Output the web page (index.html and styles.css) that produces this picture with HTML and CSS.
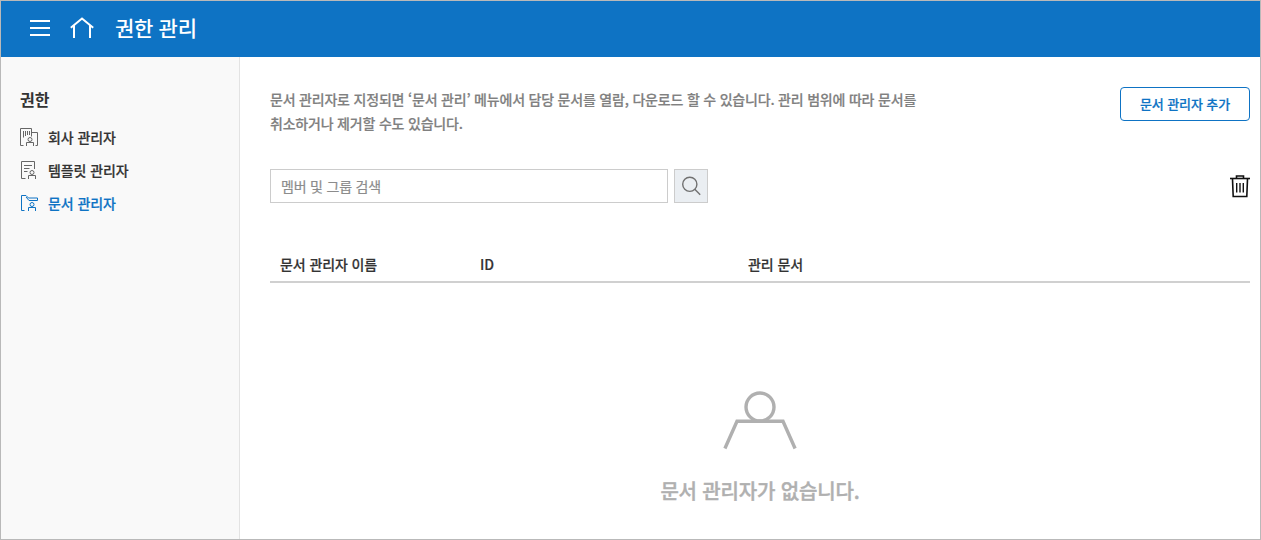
FILE: index.html
```html
<!DOCTYPE html>
<html lang="ko">
<head>
<meta charset="utf-8">
<title>권한 관리</title>
<link rel="stylesheet" href="styles.css">
</head>
<body>
<div class="app">
  <header class="topbar">
    <svg class="menu-icon" width="20" height="16" viewBox="0 0 20 16"><path d="M0 1h20M0 8h20M0 15h20"/></svg>
    <svg class="home-icon" width="24" height="22" viewBox="0 0 24 22"><path d="M.8 10.8 12 1.5l11.2 9.3M4 8.500V21M20 8.500V21"/></svg>
    <h1 class="title">권한 관리</h1>
  </header>
  <div class="body">
    <nav class="sidebar">
      <h2 class="side-title">권한</h2>
      <a class="side-item">
        <svg width="18" height="18" viewBox="0 0 18 18"><path d="M3.500 17.500h-3V.5h11v8M11.500 4.500h6v13h-2M3.500 3v6.500M5.500 3v5M7.500 3v4M9.500 3v4M6.500 18v-3.500h7V18"/><circle cx="10" cy="11.500" r="2"/></svg>
        <span>회사 관리자</span>
      </a>
      <a class="side-item">
        <svg width="18" height="18" viewBox="0 0 18 18"><path d="M5.500 17.500h-4V.5h13V8M4 4.500h8M4 7.500h5.500M4 10.500h3.500M8.500 18v-3.500h7V18"/><circle cx="12" cy="11.500" r="2"/></svg>
        <span>템플릿 관리자</span>
      </a>
      <a class="side-item active">
        <svg width="18" height="18" viewBox="0 0 18 18"><path d="M4.500 16.500h-3V1.500h4.500l2.500 2.500h9v2.500H9L6 3M8.500 17v-3.500h7V17"/><circle cx="12" cy="10.500" r="2"/></svg>
        <span>문서 관리자</span>
      </a>
    </nav>
    <main class="content">
      <section class="intro">
        <p class="desc">문서 관리자로 지정되면 ‘문서 관리’ 메뉴에서 담당 문서를 열람, 다운로드 할 수 있습니다. 관리 범위에 따라 문서를<br>취소하거나 제거할 수도 있습니다.</p>
        <button class="add-btn">문서 관리자 추가</button>
      </section>
      <section class="tools">
        <input class="search" type="text" placeholder="멤버 및 그룹 검색">
        <button class="search-btn" aria-label="검색">
          <svg width="20" height="20" viewBox="0 0 20 20"><circle cx="8.800" cy="8.300" r="7.100"/><path d="m13.800 13.300 5.400 5.400"/></svg>
        </button>
        <svg class="trash" width="20" height="23" viewBox="0 0 20 23"><path class="lid" d="M6.500 3V1h7v2"/><path d="M0 3.500h20"/><path d="M2.500 4l.7 17.500h13.600L17.500 4"/><path class="bars" d="M6.700 8v9.500M10 8v9.500M13.300 8v9.500"/></svg>
      </section>
      <div class="table-head">
        <span>문서 관리자 이름</span><span>ID</span><span>관리 문서</span>
      </div>
      <div class="empty">
        <svg width="76" height="60" viewBox="0 0 76 60"><circle cx="38" cy="16" r="14"/><path d="M2.900 57.500 15 30.300h46l12.100 27.200"/></svg>
        <p>문서 관리자가 없습니다.</p>
      </div>
    </main>
  </div>
</div>
</body>
</html>
```
FILE: styles.css
```css
* { box-sizing: border-box; }
body { margin: 0; font-family: "Noto Sans CJK KR", sans-serif; font-weight: 500; color: #333; -webkit-text-stroke: .2px currentColor; }
h1, h2, p { margin: 0; }
svg { display: block; fill: none; stroke: currentColor; flex: none; }
.app { width: 1261px; height: 540px; border: 1px solid #b9b9b9; background: #fff; display: flex; flex-direction: column; overflow: hidden; }
.topbar { height: 56px; flex: none; background: #0e73c4; color: #fff; display: flex; align-items: center; padding-left: 29px; }
.menu-icon { stroke-width: 2; margin-top: -2px; }
.home-icon { stroke-width: 2; margin: -2px 0 0 20px; }
.title { font-size: 21px; line-height: 30px; font-weight: 500; letter-spacing: -.3px; margin: -5px 0 0 21px; -webkit-text-stroke: 0; }
.body { display: flex; flex: 1; }
.sidebar { width: 239px; flex: none; background: #f9f9f9; border-right: 1px solid #e3e3e3; padding: 30px 0 0 19px; }
.side-title { font-size: 16px; line-height: 24px; font-weight: 700; margin-bottom: 9px; -webkit-text-stroke: 0; }
.side-item { display: flex; align-items: center; height: 33px; gap: 10px; font-size: 14px; line-height: 20px; letter-spacing: -.1px; }
.side-item svg { color: #666; stroke-width: 1; }
.side-item.active, .side-item.active svg { color: #0e73c4; }
.content { flex: 1; padding: 30px 10px 0 30px; }
.intro { display: flex; justify-content: space-between; height: 82px; }
.desc { font-size: 14px; line-height: 24px; letter-spacing: -.2px; color: #808080; white-space: nowrap; }
.add-btn { width: 130px; height: 34px; padding: 0 0 1px; border: 1px solid #0e73c4; border-radius: 4px; background: #fff; color: #0e73c4; font: 500 13px/20px "Noto Sans CJK KR", sans-serif; letter-spacing: -.1px; -webkit-text-stroke: .2px currentColor; }
.tools { display: flex; align-items: center; height: 34px; }
.search { width: 398px; height: 34px; border: 1px solid #ccc; padding: 0 10px 1px; font: 400 14px "Noto Sans CJK KR", sans-serif; letter-spacing: -.2px; }
.search::placeholder { color: #8c8c8c; }
.search-btn { width: 34px; height: 34px; margin-left: 6px; border: 1px solid #ccc; background: #eaeef2; padding: 0; display: flex; align-items: center; justify-content: center; color: #707070; }
.search-btn svg { stroke-width: 1.4; }
.trash { margin-left: auto; color: #111; stroke-width: 1.6; }
.trash .bars { stroke-width: 1.400; }
.table-head { margin-top: 44px; height: 36px; border-bottom: 2px solid #d0d0d0; display: grid; grid-template-columns: 200px 268px 1fr; padding: 7px 0 0 10px; font-size: 14px; line-height: 20px; letter-spacing: -.1px; }
.empty { display: flex; flex-direction: column; align-items: center; margin-top: 108px; color: #b0b0b0; }
.empty svg { stroke-width: 3.400; }
.empty p { font-size: 20px; line-height: 30px; letter-spacing: -.15px; margin-top: 25px; -webkit-text-stroke: .4px currentColor; }
```
